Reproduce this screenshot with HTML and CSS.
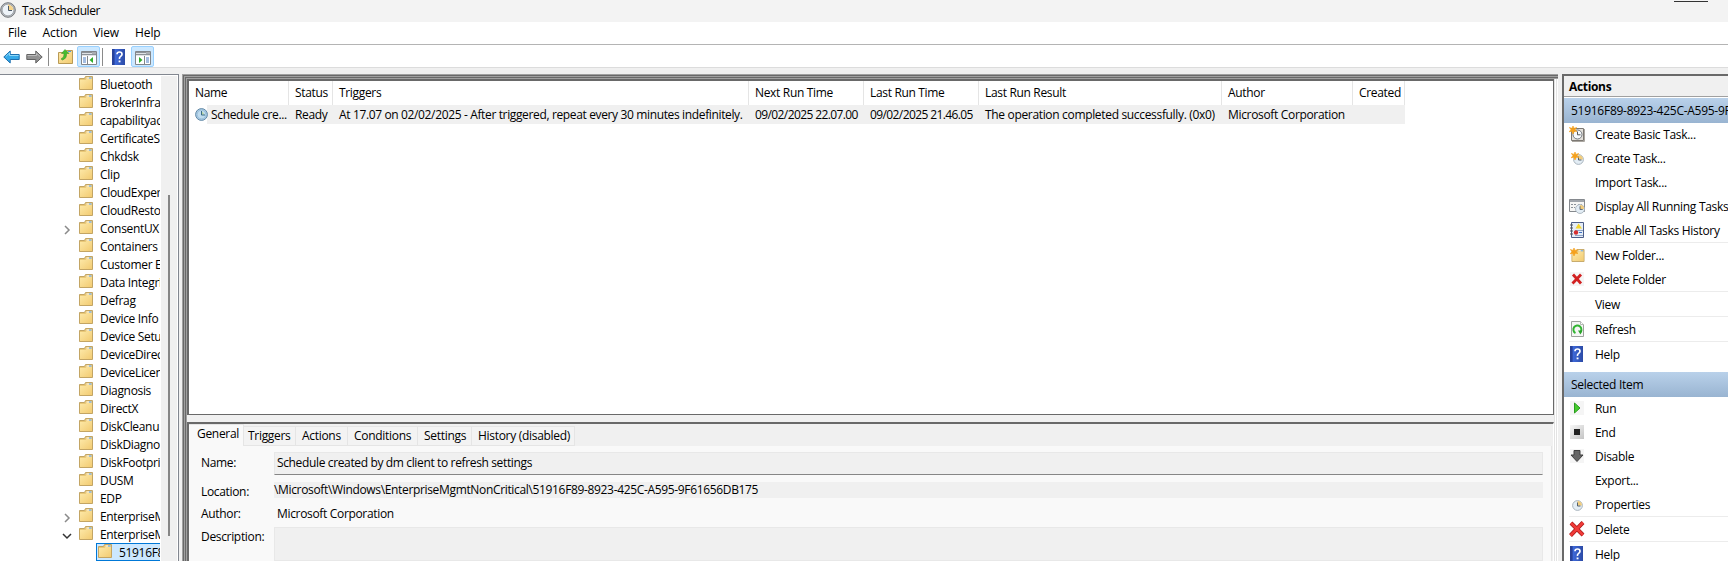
FILE: index.html
```html
<!DOCTYPE html>
<html lang="en">
<head>
    <meta charset="UTF-8">
    <meta name="viewport" content="width=device-width, initial-scale=1.0">
    <title>Task Scheduler</title>
    <link rel="stylesheet" href="styles.css">
</head>
<body>
    <!-- shared icons -->
    <svg class="defs" width="0" height="0">
        <defs>
            <linearGradient id="g-folder" x1="0" y1="0" x2="1" y2="1">
                <stop offset="0" stop-color="#fde9a8"/>
                <stop offset="1" stop-color="#f2cb72"/>
            </linearGradient>
            <linearGradient id="g-blue" x1="0" y1="0" x2="1" y2="0">
                <stop offset="0" stop-color="#1f3f9c"/>
                <stop offset="0.25" stop-color="#3d68d8"/>
                <stop offset="1" stop-color="#2c4ba6"/>
            </linearGradient>
            <linearGradient id="g-end" x1="0" y1="0" x2="1" y2="1">
                <stop offset="0" stop-color="#f8f8f8"/>
                <stop offset="1" stop-color="#c4c4c4"/>
            </linearGradient>
            <symbol id="folder" viewBox="0 0 14 14">
                <path d="M.5 2.500h5l1-2h7v13h-13z" fill="#e9c877" stroke="#c3a564"/>
                <path d="M7.500 1.500h5v1h-5z" fill="#fff"/>
                <path d="M10 1.500h2.500v1h-2.500z" fill="#4a9be8"/>
                <path d="M1 4h5.500l1-1h5.500v10h-12z" fill="url(#g-folder)"/>
            </symbol>
            <symbol id="clock" viewBox="0 0 16 16">
                <circle cx="8" cy="8" r="7.300" fill="#b9bcc0" stroke="#76797d"/>
                <circle cx="8" cy="8" r="5.800" fill="#eef3f8" stroke="#8b9096" stroke-width=".6"/>
                <path d="M8 8V2.600A5.400 5.400 0 0 1 13.400 8z" fill="#f6d48c"/>
                <path d="M8.500 4V8.500h3.500" fill="none" stroke="#4d5a68" stroke-width="1"/>
            </symbol>
            <symbol id="small-clock" viewBox="0 0 11 11">
                <circle cx="5.500" cy="5.500" r="4.900" fill="#e3edf5" stroke="#a9b4bd"/>
                <path d="M5.500 5.500V1A4.500 4.500 0 0 1 10 5.500z" fill="#f3cd7c"/>
                <path d="M5.500 2.500V6h3" fill="none" stroke="#53606d"/>
            </symbol>
            <symbol id="star" viewBox="0 0 10 10">
                <path d="M5 0l1.200 3L9.500 1.800 7.600 4.600 10 7 6.600 6.500 5 10 3.600 6.600 0 7.200 2.500 4.700.5 1.800 3.800 3z" fill="#f5a11c" stroke="#f5a11c" stroke-width=".8"/>
            </symbol>
            <symbol id="help" viewBox="0 0 13 16">
                <path d="M0 0h13v16h-13z" fill="url(#g-blue)"/>
                <path d="M0 0h2.500v16h-2.500z" fill="#28429a"/>
                <path d="M5 5.300Q5 3 7.500 3t2.500 2.200Q10 6.500 8.600 7.400T7.500 10" fill="none" stroke="#fff" stroke-width="1.700"/>
                <path d="M6.600 11.500h1.900v1.800h-1.900z" fill="#fff"/>
            </symbol>
            <symbol id="pane" viewBox="0 0 16 14">
                <path d="M.5.5h15v13h-15z" fill="#fff" stroke="#82868b"/>
                <path d="M1 1h14v3h-14z" fill="#8d9298"/>
                <path d="M1 2.500h10M1 4.500h14" stroke="#dfe2e5"/>
                <path d="M11.500 2h1M13.500 2h1" stroke="#fff"/>
            </symbol>
        </defs>
    </svg>

    <div class="window">
        <header class="titlebar">
            <svg class="app-icon" width="16" height="16"><use href="#clock"/></svg>
            <span class="title">Task Scheduler</span>
            <span class="minimize"></span>
        </header>

        <nav class="menubar">
            <span>File</span>
            <span>Action</span>
            <span>View</span>
            <span>Help</span>
        </nav>

        <div class="toolbar">
            <svg class="arrow" width="17" height="14" viewBox="0 0 17 14"><path d="M.8 7L7.200 1v3.500h9v5h-9V13z" fill="#35a9e8" stroke="#1d6fae"/><path d="M2.800 6.500L6.500 3v2.500h9" fill="none" stroke="#8fd8f8"/></svg>
            <svg class="arrow" width="17" height="14" viewBox="0 0 17 14"><path d="M16.200 7L9.800 1v3.500h-9v5h9V13z" fill="#929292" stroke="#626262"/><path d="M1.500 5.500h9V3.300l3.500 3.200" fill="none" stroke="#bcbcbc"/></svg>
            <span class="divider"></span>
            <svg class="up-folder" width="15" height="15" viewBox="0 0 15 15"><path d="M.5 3.500h7l1-2h6v13h-14z" fill="url(#g-folder)" stroke="#b99a55"/><path d="M10 2.500h3" stroke="#4a9be8"/><path d="M3 10Q6.500 8.500 6 4.500H3.500L7 .5l4 4H8.500Q9 9.500 4.500 11z" fill="#45bd2f" stroke="#2f8c22" stroke-width=".5"/></svg>
            <span class="toggle">
                <svg width="16" height="14"><use href="#pane"/><path d="M6.500 5v8" stroke="#82868b"/><path d="M2 7h3M2 9h3M2 11h3" stroke="#4a7cc4"/><path d="M12 6v6l-3.500-3z" fill="#2fae2b"/></svg>
            </span>
            <span class="divider divider-near"></span>
            <svg class="toolbar-help" width="13" height="16"><use href="#help"/></svg>
            <span class="toggle">
                <svg width="16" height="14"><use href="#pane"/><path d="M9.500 5v8" stroke="#82868b"/><path d="M11 7h3M11 9h3M11 11h3" stroke="#4a7cc4"/><path d="M4 6v6l3.500-3z" fill="#2fae2b"/></svg>
            </span>
        </div>

        <main class="body">
            <aside class="tree">
                <ul class="tree-list" id="tree"></ul>
                <div class="scrollbar"><span class="thumb"></span></div>
            </aside>

            <section class="center">
                <div class="tasks">
                    <div class="task-row task-head">
                        <span>Name</span>
                        <span>Status</span>
                        <span>Triggers</span>
                        <span>Next Run Time</span>
                        <span>Last Run Time</span>
                        <span>Last Run Result</span>
                        <span>Author</span>
                        <span>Created</span>
                    </div>
                    <div class="task-row task-item">
                        <span class="task-name">
                            <svg width="13" height="13" viewBox="0 0 13 13"><circle cx="6.500" cy="6.500" r="5.900" fill="#a9cbe6" stroke="#6288a5"/><circle cx="6.500" cy="6.500" r="4.300" fill="#c0dcef" stroke="#89afcb" stroke-width=".5"/><path d="M7 3.500l2.500 3H7z" fill="#b9d59d"/><path d="M6.500 3v4H10" fill="none" stroke="#3b6c88"/></svg>
                            <em>Schedule cre...</em>
                        </span>
                        <span>Ready</span>
                        <span class="trigger-text">At 17.07 on 02/02/2025 - After triggered, repeat every 30 minutes indefinitely.</span>
                        <span class="date">09/02/2025 22.07.00</span>
                        <span class="date">09/02/2025 21.46.05</span>
                        <span>The operation completed successfully. (0x0)</span>
                        <span>Microsoft Corporation</span>
                        <span></span>
                    </div>
                </div>

                <div class="details">
                    <div class="tabs">
                        <span class="tab active">General</span>
                        <span class="tab tab-triggers">Triggers</span>
                        <span class="tab tab-actions">Actions</span>
                        <span class="tab tab-conditions">Conditions</span>
                        <span class="tab tab-settings">Settings</span>
                        <span class="tab tab-history">History (disabled)</span>
                    </div>
                    <div class="form">
                        <label>Name:</label>
                        <div class="field field-name">Schedule created by dm client to refresh settings</div>
                        <label class="label-location">Location:</label>
                        <div class="field-location">\Microsoft\Windows\EnterpriseMgmtNonCritical\51916F89-8923-425C-A595-9F61656DB175</div>
                        <label>Author:</label>
                        <div class="field-author">Microsoft Corporation</div>
                        <label class="label-description">Description:</label>
                        <div class="field field-description"></div>
                    </div>
                </div>
            </section>

            <aside class="actions">
                <h2>Actions</h2>
                <h3>51916F89-8923-425C-A595-9F61656DB175</h3>
                <ul>
                    <li><svg width="16" height="16"><path d="M2.500 2.500h12v12h-12z" fill="#e3e0da" stroke="#7c7873"/><path d="M15.500 3v12.500H3" fill="none" stroke="#aaa6a0"/><circle cx="8.500" cy="8.500" r="4.500" fill="#f7fafc" stroke="#72777d"/><path d="M8.500 5.500v3.300h3" fill="none" stroke="#555"/><use href="#star" width="8" height="8"/></svg>Create Basic Task...</li>
                    <li><svg width="16" height="16"><use href="#small-clock" x="4" y="4" width="11" height="11"/><use href="#star" x="2" y="2" width="8" height="8"/></svg>Create Task...</li>
                    <li><svg width="16" height="16"></svg>Import Task...</li>
                    <li><svg width="16" height="16"><path d="M.5 1.500h15v12h-15z" fill="#f6f6f4" stroke="#85898e"/><path d="M1 3h14" stroke="#a0a5ab" stroke-width="2"/><path d="M2 6.500h5M2 9.500h4M9 6.500h4" stroke="#8b9299" stroke-dasharray="2 1"/><use href="#small-clock" x="6" y="6" width="10" height="10"/></svg>Display All Running Tasks</li>
                    <li><svg width="16" height="16"><path d="M2.500.5h12v15h-12z" fill="#e5edf7" stroke="#4c5d87"/><path d="M1 3h3M1 6h3M1 9h3M1 12h3" stroke="#555"/><path d="M9.500 1.500l3.500 5H6.500z" fill="#f5d62c"/><path d="M6 8.500h8M6 13.500h8" stroke="#8fa4c5"/><circle cx="7" cy="10.500" r="2.200" fill="#d62e2e"/><path d="M10 10.500h3" stroke="#3d70c4"/></svg>Enable All Tasks History</li>
                    <li class="line"><svg width="16" height="16"><use href="#folder" x="2" y="2" width="14" height="13"/><use href="#star" x="1" y="1" width="8" height="8"/></svg>New Folder...</li>
                    <li><svg width="16" height="16"><path d="M1 1h14v14h-14z" fill="#f5f5f5"/><path d="M4 3.500l8 9M12 3.500l-8.500 9" stroke="#d22020" stroke-width="2.800"/></svg>Delete Folder</li>
                    <li class="line"><svg width="16" height="16"></svg>View</li>
                    <li class="line"><svg width="16" height="16"><path d="M2.500.5h9l3 3v12h-12z" fill="#f5f6f5" stroke="#9da19d"/><path d="M11.500.5v3h3" fill="#fff" stroke="#b5b9b5"/><path d="M6.500 12A4 4 0 1 1 11 11.500" fill="none" stroke="#32b432" stroke-width="2"/><path d="M9 9.500h4.500l-2 4z" fill="#28a228"/></svg>Refresh</li>
                    <li class="line"><svg width="16" height="16"><use href="#help" x="1" width="13" height="16"/></svg>Help</li>
                </ul>
                <h3>Selected Item</h3>
                <ul>
                    <li><svg width="16" height="16"><path d="M1 1h14v14h-14z" fill="#f5f5f5"/><path d="M5.500 3v10l5.500-5z" fill="#45cd2d" stroke="#2b9c20"/></svg>Run</li>
                    <li><svg width="16" height="16"><path d="M1 1h14v14h-14z" fill="url(#g-end)"/><path d="M5 5h6v6h-6z" fill="#222"/></svg>End</li>
                    <li><svg width="16" height="16"><path d="M1 1h14v14h-14z" fill="#f5f5f5"/><path d="M5 2.500h6v4.500h3L8 13.500 2 7h3z" fill="#666" stroke="#3e3e3e"/></svg>Disable</li>
                    <li><svg width="16" height="16"></svg>Export...</li>
                    <li><svg width="16" height="16"><use href="#small-clock" x="3" y="4" width="11" height="11"/></svg>Properties</li>
                    <li class="line"><svg width="16" height="16"><path d="M2 2l12 12M14 1.500L1.500 14.500" stroke="#a51717" stroke-width="4"/><path d="M2 2l12 12M14 1.500L1.500 14.500" stroke="#f03a38" stroke-width="2.600"/></svg>Delete</li>
                    <li class="line"><svg width="16" height="16"><use href="#help" x="1" width="13" height="16"/></svg>Help</li>
                </ul>
            </aside>
        </main>
    </div>
    <script src="script.js"></script>
</body>
</html>
```
FILE: styles.css
```css
* {
    box-sizing: border-box;
}

body {
    margin: 0;
    font-family: "Open Sans", "Noto Sans", sans-serif;
    font-size: 12px;
    letter-spacing: -0.33px;
    color: #000;
    background: #f0f0f0;
    overflow: hidden;
}

.defs {
    position: absolute;
}

ul, h2, h3 {
    margin: 0;
    padding: 0;
    list-style: none;
    font-size: 12px;
    font-weight: normal;
}

svg {
    display: block;
    flex: none;
}

.window {
    height: 561px;
    display: flex;
    flex-direction: column;
    white-space: nowrap;
}

.titlebar {
    display: flex;
    align-items: center;
    height: 22px;
    padding-right: 20px;
    background: #f3f3f3;
}

.app-icon {
    margin-top: -2px;
}

.title {
    margin: -2px 0 0 6px;
    letter-spacing: -0.45px;
}

.minimize {
    align-self: flex-start;
    width: 34px;
    height: 1px;
    margin: 1px 0 0 auto;
    background: #333;
}

.menubar {
    display: flex;
    gap: 16px;
    height: 23px;
    padding-left: 8px;
    line-height: 22px;
    letter-spacing: -0.1px;
    background: #fff;
    border-bottom: 1px solid #b4b4b4;
}

.toolbar {
    display: flex;
    align-items: center;
    height: 23px;
    padding: 1px 0 0 3px;
    background: #fff;
    border-bottom: 1px solid #dcdcdc;
}

.arrow {
    margin-right: 6px;
}

.arrow + .arrow {
    margin-right: 5px;
}

.divider {
    width: 1px;
    height: 18px;
    margin-right: 9px;
    background: #8a8a8a;
}

.divider-near {
    margin: 0 9px 0 2px;
}

.up-folder {
    margin-right: 4px;
}

.toggle {
    display: flex;
    align-items: center;
    justify-content: center;
    width: 23px;
    height: 21px;
    padding-top: 2px;
    background: #cce8ff;
    border: 1px solid #99d1ff;
    border-radius: 2px;
}

.toolbar-help {
    margin-right: 6px;
}

.body {
    flex: 1;
    min-height: 0;
    display: flex;
    padding-top: 6px;
}

/* left tree */
.tree {
    display: flex;
    width: 179px;
    margin-right: 3px;
    background: #fff;
    border-top: 1px solid #828790;
    border-right: 1px solid #828790;
}

.tree-list {
    width: 160px;
    margin-right: 1px;
    overflow: hidden;
}

.tree-list li {
    display: flex;
    align-items: center;
    height: 18px;
    padding-left: 62px;
}

.tree-list .chevron {
    width: 10px;
    margin: 3px 7px 0 0;
}

.tree-list .folder {
    margin: -2px 7px 0 0;
}

.tree-list .selected {
    margin-left: 96px;
    padding-left: 1px;
    background: #cce8ff;
    border: 1px solid #0078d7;
    border-right: 0;
}

.tree-list .selected .chevron {
    display: none;
}

.scrollbar {
    flex: 1;
    margin: 1px 1px 0 0;
    padding: 119px 0 0 7px;
    background: #f0f0f0;
}

.thumb {
    display: block;
    width: 2px;
    height: 341px;
    background: #868686;
}

/* middle column */
.center {
    display: flex;
    flex-direction: column;
    width: 1376px;
    margin-right: 4px;
    padding: 5px 4px 0 5px;
    background: #f0f0f0;
    /* stacked bevels of the nested frames */
    box-shadow:
        inset 1px 1px #a0a0a0,
        inset 2px 2px #696969,
        inset 3px 3px #a0a0a0,
        inset 4px 4px #696969,
        inset 5px 5px #a0a0a0,
        inset -1px 0 #fff,
        inset -2px 0 #e3e3e3,
        inset -3px 0 #fff,
        inset -4px 0 #e3e3e3;
}

.tasks {
    height: 336px;
    background: #fff;
    border: 2px solid #696969;
    border-right-width: 1px;
    border-bottom-width: 1px;
}

.task-row {
    display: grid;
    grid-template-columns: 100px 44px 416px 115px 115px 243px 131px 52px;
    width: 1216px;
}

.task-row > span {
    padding-left: 6px;
}

.task-head {
    height: 24px;
    line-height: 24px;
}

.task-head > span {
    border-right: 1px solid #e5e5e5;
}

.task-item {
    height: 19px;
    line-height: 19px;
    background: linear-gradient(to right, #fff 18px, #f0f0f0 18px);
}

.task-name {
    display: flex;
    align-items: center;
}

.task-name em {
    margin-left: 3px;
    font-style: normal;
}

.trigger-text {
    letter-spacing: -0.36px;
}

.date {
    letter-spacing: -0.6px;
}

.details {
    flex: 1;
    margin-top: 7px;
    background: #f0f0f0;
    border-top: 2px solid #696969;
    border-left: 2px solid #696969;
    border-right: 1px solid #fff;
}

.tabs {
    display: flex;
    align-items: flex-end;
    height: 22px;
    letter-spacing: -0.3px;
}

.tab {
    height: 20px;
    padding-left: 5px;
    line-height: 18px;
    background: #f3f3f3;
    border: 1px solid #e5e5e5;
    border-left: 0;
}

.tab.active {
    width: 55px;
    height: 22px;
    padding-left: 8px;
    background: #f9f9f9;
    border-bottom: 0;
}

.tab-triggers { width: 52px; padding-left: 4px; }
.tab-actions { width: 52px; padding-left: 6px; }
.tab-conditions { width: 70px; padding-left: 6px; }
.tab-settings { width: 54px; padding-left: 6px; }
.tab-history { width: 103px; padding-left: 6px; }

.form {
    display: grid;
    grid-template-columns: 73px 1269px;
    grid-template-rows: 23px 7px 16px 8px 15px 6px 34px;
    height: 115px;
    margin-right: 1px;
    padding: 6px 0 0 12px;
    line-height: 22px;
    background: #f9f9f9;
    border-right: 1px solid #e5e5e5;
}

.form label:nth-of-type(1), .field-name { grid-row: 1; }
.form label:nth-of-type(2), .field-location { grid-row: 3; }
.form label:nth-of-type(3), .field-author { grid-row: 5; }
.form label:nth-of-type(4), .field-description { grid-row: 7; }

.field {
    padding-left: 2px;
    line-height: 20px;
    letter-spacing: -0.36px;
    background: #f0f0f0;
    border: 1px solid #e8e8e8;
}

.field-name {
    border-bottom-color: #868686;
}

.label-location {
    line-height: 19px;
}

.field-location {
    line-height: 15px;
    letter-spacing: -0.34px;
    background: #f0f0f0;
}

.form label:nth-of-type(3), .field-author {
    line-height: 15px;
}

.field-author {
    padding-left: 3px;
}

.label-description {
    line-height: 20px;
}

/* right actions pane */
.actions {
    flex: 1;
    overflow: hidden;
    background: #fff;
    border-top: 2px solid #696969;
    border-left: 2px solid #696969;
}

.actions h2 {
    height: 21px;
    margin-bottom: 1px;
    padding-left: 5px;
    line-height: 21px;
    font-weight: bold;
    background: #f0f0f0;
    border-bottom: 1px solid #a0a0a0;
}

.actions h3 {
    height: 25px;
    padding-left: 7px;
    line-height: 25px;
    letter-spacing: -0.27px;
    background: linear-gradient(#b9d1ea, #99b4d1);
}

.actions ul {
    margin-top: -1px;
    letter-spacing: -0.3px;
}

.actions ul + h3 {
    margin-top: 6px;
}

.actions li {
    display: flex;
    align-items: center;
    gap: 10px;
    height: 24px;
    margin-left: 5px;
}

.actions li.line {
    height: 25px;
    border-top: 1px solid #ececec;
}
```
FILE: script.js
```javascript
const folders = [
    'Bluetooth', 'BrokerInfras', 'capabilityac', 'CertificateS',
    'Chkdsk', 'Clip', 'CloudExper', 'CloudResto', 'ConsentUX', 'Containers',
    'Customer E', 'Data Integri', 'Defrag', 'Device Info', 'Device Setu',
    'DeviceDirec', 'DeviceLicen', 'Diagnosis', 'DirectX', 'DiskCleanu',
    'DiskDiagno', 'DiskFootpri', 'DUSM', 'EDP', 'EnterpriseM', 'EnterpriseM',
    '51916F8'
];
const closed = '<path d="M3 1l4 4-4 4" fill="none" stroke="#8a8a8a" stroke-width="1.5"/>';
const opened = '<path d="M1 3l4 4 4-4" fill="none" stroke="#333" stroke-width="1.5"/>';
const chevrons = { 8: closed, 24: closed, 25: opened };

document.getElementById('tree').innerHTML = folders.map((name, i) => `
    <li class="${i === 26 ? 'selected' : ''}">
        <svg class="chevron" width="10" height="10">${chevrons[i] || ''}</svg>
        <svg class="folder" width="14" height="14"><use href="#folder"/></svg>
        <span>${name}</span>
    </li>
`).join('');
```
